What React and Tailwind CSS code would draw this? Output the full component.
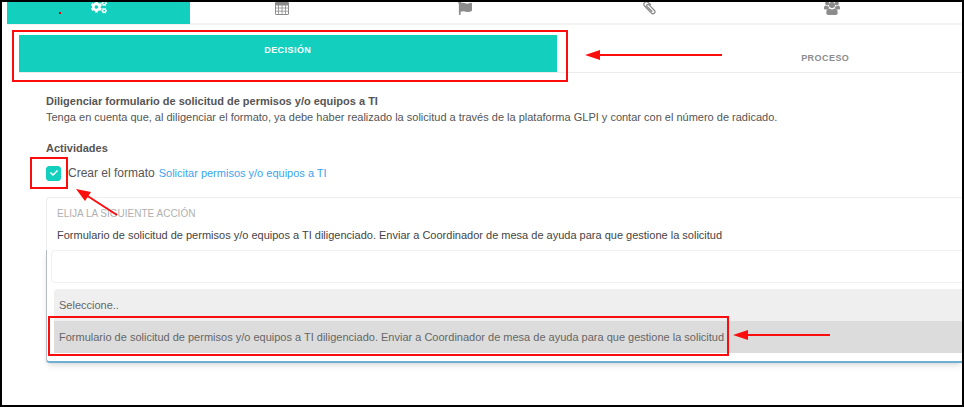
import React, { useState } from "react";
import { FaCogs, FaFlag, FaCheck } from "react-icons/fa";

const ACTION =
  "Formulario de solicitud de permisos y/o equipos a TI diligenciado. Enviar a Coordinador de mesa de ayuda para que gestione la solicitud";

function CalendarIcon() {
  return (
    <svg viewBox="0 0 14 15" className="w-[14px] h-[15px]" fill="none" stroke="currentColor">
      <rect x="0.5" y="2.5" width="13" height="12" rx="0.5" />
      <path d="M3.5 5v9.5M7 5v9.5M10.500 5v9.5M1 8h12M1 11.200h12" strokeWidth="0.8" />
      <path d="M0 2.500h14v3H0z" fill="currentColor" stroke="none" />
      <path d="M3.500 0v3M10.500 0v3" strokeWidth="2" />
    </svg>
  );
}

function PaperclipIcon() {
  return (
    <svg viewBox="0 0 14 14" className="w-[14px] h-[14px]" fill="none" stroke="currentColor" strokeWidth="1.3" strokeLinecap="round">
      <path d="M8.500 3.500L5.800 1.200C3.800-.4.600 2.500 2.400 4.700L9.300 12C11.500 14 14.200 11.400 12.300 9.300L7 3.900C5.600 2.600 3.900 4.200 5.200 5.600L9.900 10.300" />
    </svg>
  );
}

function UsersIcon() {
  return (
    <svg viewBox="0 0 16 14" className="w-4 h-[14px]" fill="currentColor">
      <circle cx="3.200" cy="2.400" r="2" />
      <circle cx="12.800" cy="2.400" r="2" />
      <circle cx="8" cy="4" r="3" />
      <path d="M0 7.400C0 6 .4 4.600 1.500 4.600c.8.7 2 .9 3 .5 0 1 .3 1.700.8 2.300-.9 0-1.700.4-2.200 1H1.500C.6 8.400 0 8.100 0 7.400zM16 7.400c0-1.400-.4-2.800-1.500-2.800-.8.7-2 .9-3 .5 0 1-.3 1.700-.8 2.300.9 0 1.700.4 2.200 1h1.600c.9 0 1.500-.3 1.500-1z" />
      <path d="M2.300 12c0-2 .6-4.400 2.700-4.400.6.5 1.700.8 3 .8s2.400-.3 3-.8c2.100 0 2.700 2.400 2.700 4.400 0 1.300-.8 2-2 2H4.300c-1.200 0-2-.7-2-2z" />
    </svg>
  );
}

const tabs = [
  { name: "Decisión", icon: <FaCogs className="w-4 h-4" /> },
  { name: "Calendario", icon: <CalendarIcon /> },
  { name: "Hitos", icon: <FaFlag className="w-[14px] h-[14px]" /> },
  { name: "Adjuntos", icon: <PaperclipIcon /> },
  { name: "Usuarios", icon: <UsersIcon /> },
];

// Red marker frame, sized by its insets
function Highlight({ className }) {
  return <div className={`absolute border-2 border-[#fb0d0d] pointer-events-none ${className}`} />;
}

function LeftArrow({ className, width }) {
  return (
    <svg
      className={`absolute pointer-events-none ${className}`}
      width={width}
      height="10"
      viewBox={`0 0 ${width} 10`}
    >
      <path d={`M12 5H${width}`} stroke="#fb0d0d" strokeWidth="2" />
      <path d="M0 5L15 0V10Z" fill="#fb0d0d" />
    </svg>
  );
}

export default function App() {
  const [activeTab, setActiveTab] = useState(0);
  const [created, setCreated] = useState(true);
  const [search, setSearch] = useState("");

  return (
    <div className="min-h-screen overflow-hidden bg-white border-2 border-black pl-[5px] font-['Liberation_Sans',Arial,sans-serif] text-[11px] leading-4 text-[#555]">
      {/* Main tabs */}
      <nav className="relative flex h-[23px] border-b-2 border-[#f3f3f3]">
        {tabs.map((tab, i) => (
          <button
            key={tab.name}
            aria-label={tab.name}
            onClick={() => setActiveTab(i)}
            className={`flex w-[19.2%] shrink-0 h-[22px] items-end justify-center overflow-hidden pb-[9px] ${
              activeTab === i ? "bg-[#12cfbe] text-white" : "text-[#8c8c8c]"
            }`}
          >
            {tab.icon}
          </button>
        ))}
        <span className="absolute left-[52px] top-[10px] h-[2px] w-[2px] bg-red-600" />
      </nav>

      {/* Sub tabs */}
      <div className="relative ml-3 mt-[10px]">
        <div className="flex overflow-hidden border-b border-[#ececec] text-[9px] font-bold tracking-wider">
          <button className="w-[57%] h-[37px] shrink-0 bg-[#12cfbe] pb-2 text-white">DECISIÓN</button>
          <button className="w-[57%] h-[37px] shrink-0 pt-2 text-[#8c8c8c]">PROCESO</button>
        </div>
        <Highlight className="-left-[7px] -top-[5px] w-[59%] h-[52px]" />
        <LeftArrow className="left-[60%] top-[15px]" width={137} />
      </div>

      <main className="pl-[39px] pt-5">
        <h1 className="font-bold">Diligenciar formulario de solicitud de permisos y/o equipos a TI</h1>
        <p>
          Tenga en cuenta que, al diligenciar el formato, ya debe haber realizado la solicitud a través
          de la plataforma GLPI y contar con el número de radicado.
        </p>

        <h2 className="mt-[15px] font-bold">Actividades</h2>
        <div className="relative mt-2 flex items-center">
          <label className="flex items-center gap-[7px] text-xs leading-[18px]">
            <span className="grid h-[15px] w-[15px]">
              <input
                type="checkbox"
                checked={created}
                onChange={(e) => setCreated(e.target.checked)}
                className="col-start-1 row-start-1 h-[15px] w-[15px] appearance-none rounded-[3px] border border-[#12cfbe] checked:bg-[#12cfbe]"
              />
              <FaCheck className="pointer-events-none col-start-1 row-start-1 h-2 w-2 place-self-center text-white" />
            </span>
            Crear el formato
          </label>
          <a href="#formato" className="ml-1 text-[#3ba4ee]">
            Solicitar permisos y/o equipos a TI
          </a>
          <Highlight className="-left-4 -top-[7px] h-8 w-[38px]" />
          <svg className="pointer-events-none absolute left-[30px] top-[25px] z-10" width="42" height="27" viewBox="0 0 42 27">
            <path d="M10 6L41 26" stroke="#fb0d0d" strokeWidth="2" />
            <path d="M0 0L15 3L9 12Z" fill="#fb0d0d" />
          </svg>
        </div>

        {/* Next action */}
        <section className="mt-[15px] rounded-tl-sm border-l border-t border-[#eee]">
          <div className="px-[10px] pt-2">
            <div className="text-[10px] text-[#b0b0b0]">ELIJA LA SIGUIENTE ACCIÓN</div>
            <button className="mt-[5px] block text-left text-[#444]">{ACTION}</button>
          </div>

          <div className="relative -ml-px mt-px rounded-bl border-b-2 border-l border-b-[#6faed3] border-l-[#b5bcc2] bg-white pb-2 shadow-md">
            <input
              aria-label="Buscar acción"
              value={search}
              onChange={(e) => setSearch(e.target.value)}
              className="ml-1 mt-[7px] block h-[33px] w-full rounded-l-sm border border-[#f0f0f0] px-2 outline-none"
            />
            <ul role="listbox" aria-label="Siguiente acción" className="ml-[7px] mt-[6px] text-[#666]">
              <li role="option" aria-selected="false" className="rounded-tl-sm bg-[#efefef] px-[5px] py-2">
                Seleccione..
              </li>
              <li role="option" aria-selected="true" className="bg-[#dcdcdc] px-[5px] py-2">
                {ACTION}
              </li>
            </ul>
            <Highlight className="left-px bottom-[5px] h-10 w-[681px]" />
            <LeftArrow className="left-[686px] bottom-[21px]" width={97} />
          </div>
        </section>
      </main>
    </div>
  );
}
